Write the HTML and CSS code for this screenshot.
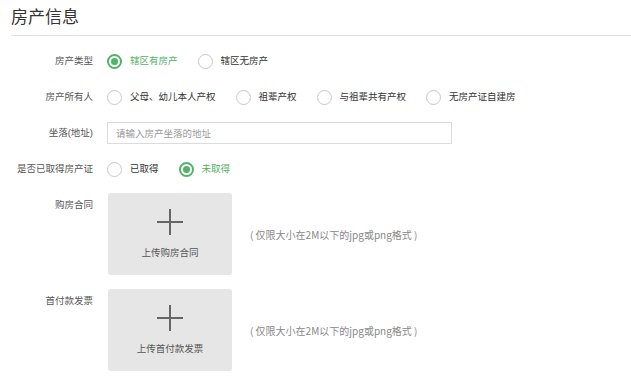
FILE: index.html
```html
<!DOCTYPE html>
<html lang="zh-CN">
<head>
  <meta charset="UTF-8" />
  <meta name="viewport" content="width=device-width, initial-scale=1.0"/>
  <title>房产信息</title>
  <link rel="stylesheet" href="styles.css">
</head>
<body>
  <h2 class="title">房产信息</h2>

  <div class="form">
    <div class="row">
      <span class="label">房产类型</span>
      <label class="option checked"><span class="radio"></span>辖区有房产</label>
      <label class="option"><span class="radio"></span>辖区无房产</label>
    </div>

    <div class="row">
      <span class="label">房产所有人</span>
      <label class="option"><span class="radio"></span>父母、幼儿本人产权</label>
      <label class="option"><span class="radio"></span>祖辈产权</label>
      <label class="option"><span class="radio"></span>与祖辈共有产权</label>
      <label class="option"><span class="radio"></span>无房产证自建房</label>
    </div>

    <div class="row">
      <span class="label">坐落(地址)</span>
      <input class="text-input" type="text" placeholder="请输入房产坐落的地址">
    </div>

    <div class="row">
      <span class="label">是否已取得房产证</span>
      <label class="option"><span class="radio"></span>已取得</label>
      <label class="option checked"><span class="radio"></span>未取得</label>
    </div>

    <div class="row upload-row">
      <span class="label">购房合同</span>
      <div class="upload-box">
        <span class="plus"></span>
        <span class="upload-text">上传购房合同</span>
      </div>
      <span class="hint">( 仅限大小在2M以下的jpg或png格式 )</span>
    </div>

    <div class="row upload-row second">
      <span class="label">首付款发票</span>
      <div class="upload-box">
        <span class="plus"></span>
        <span class="upload-text">上传首付款发票</span>
      </div>
      <span class="hint">( 仅限大小在2M以下的jpg或png格式 )</span>
    </div>
  </div>
</body>
</html>
```

FILE: styles.css
```css
:root {
  --green: #52b266;
  --line: #e2e2e2;
  --text-color: #333333;
  --label-color: #555555;
}

* {
  margin: 0;
  padding: 0;
  box-sizing: border-box;
}

body {
  font-family: "Liberation Sans", "Noto Sans CJK SC", sans-serif;
  font-size: 9.5px;
  color: var(--text-color);
  background: #fff;
  padding-left: 11px;
}

.title {
  font-size: 17px;
  font-weight: normal;
  line-height: 20px;
  padding: 8px 0 7px;
  border-bottom: 1px solid var(--line);
  color: #333;
}

.form {
  display: flex;
  flex-direction: column;
  gap: 12px;
  padding-top: 13px;
}

.row {
  display: flex;
  align-items: center;
  height: 24px;
}

.label {
  width: 82px;
  margin-right: 14px;
  text-align: right;
  color: var(--label-color);
  line-height: 12px;
  white-space: nowrap;
}

.option {
  display: inline-flex;
  align-items: center;
  gap: 8px;
  margin-right: 20px;
  line-height: 12px;
  color: var(--text-color);
}

.radio {
  width: 15px;
  height: 15px;
  border: 1px solid #c8c8c8;
  border-radius: 50%;
  display: inline-flex;
  align-items: center;
  justify-content: center;
}

.option.checked {
  color: var(--green);
}

.option.checked .radio {
  border: 2px solid var(--green);
}

.option.checked .radio::after {
  content: "";
  width: 7px;
  height: 7px;
  border-radius: 50%;
  background: var(--green);
}

.text-input {
  width: 345px;
  height: 22px;
  border: 1px solid #dcdcdc;
  padding-left: 8px;
  font-family: inherit;
  font-size: 9.5px;
  color: var(--text-color);
  outline: none;
}

.text-input::placeholder {
  color: #999;
}

.upload-row {
  height: 82px;
  align-items: flex-start;
}

.upload-row.second {
  margin-top: 2px;
}

.upload-row .label {
  padding-top: 6px;
}

.upload-box {
  width: 124px;
  height: 82px;
  margin-left: 1px;
  background: #e6e6e6;
  border-radius: 3px;
  display: flex;
  flex-direction: column;
  align-items: center;
  padding-top: 16px;
}

.plus {
  position: relative;
  width: 26px;
  height: 26px;
}

.plus::before,
.plus::after {
  content: "";
  position: absolute;
  background: #666;
}

.plus::before {
  left: 0;
  top: 12px;
  width: 26px;
  height: 2px;
}

.plus::after {
  left: 12px;
  top: 0;
  width: 2px;
  height: 26px;
}

.upload-text {
  margin-top: 12px;
  line-height: 12px;
  color: #555;
}

.hint {
  align-self: center;
  margin-left: 18px;
  font-family: "Noto Sans CJK SC", sans-serif;
  font-size: 10px;
  color: #888;
}
```
